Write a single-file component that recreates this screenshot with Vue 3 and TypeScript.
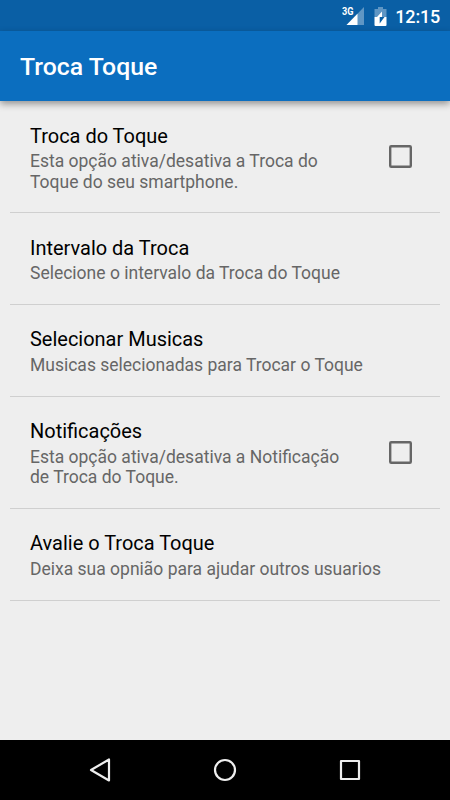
<script setup lang="ts">
interface Preference {
  title: string
  summary: string[]
  checkbox?: boolean
}

const preferences: Preference[] = [
  { title: 'Troca do Toque', summary: ['Esta opção ativa/desativa a Troca do', 'Toque do seu smartphone.'], checkbox: true },
  { title: 'Intervalo da Troca', summary: ['Selecione o intervalo da Troca do Toque'] },
  { title: 'Selecionar Musicas', summary: ['Musicas selecionadas para Trocar o Toque'] },
  { title: 'Notificações', summary: ['Esta opção ativa/desativa a Notificação', 'de Troca do Toque.'], checkbox: true },
  { title: 'Avalie o Troca Toque', summary: ['Deixa sua opnião para ajudar outros usuarios'] },
]
</script>

<template>
  <div class="screen">
    <header class="status">
      <svg class="signal" width="23" height="20" viewBox="0 0 23 20">
        <path d="M22 1V19H4.500Z" fill="#fff" fill-opacity=".35" />
        <path d="M15.500 7.700V19H4.500Z" fill="#fff" />
        <text x="0" y="8.800" class="network" textLength="11.500" lengthAdjust="spacingAndGlyphs">3G</text>
      </svg>
      <svg class="battery" width="13" height="19" viewBox="0 0 13 19">
        <path d="M4 0H9V2H12.500V10H.5V2H4Z" fill="#fff" fill-opacity=".35" />
        <path d="M.5 10H12.500V18Q12.500 19 11.500 19H1.500Q.5 19 .5 18Z" fill="#fff" />
        <path d="M8 4.500V10H3Z" fill="#fff" />
        <path d="M3 10H5.700V16.500L10.500 10Z" fill="#0a5fa5" />
      </svg>
      <span class="clock">12:15</span>
    </header>
    <div class="toolbar"><h1>Troca Toque</h1></div>
    <main class="list">
      <section v-for="item in preferences" :key="item.title" class="row">
        <div class="copy">
          <h2>{{ item.title }}</h2>
          <p v-for="line in item.summary" :key="line">{{ line }}</p>
        </div>
        <svg v-if="item.checkbox" class="box" width="23" height="23" viewBox="0 0 23 23">
          <rect x="1.200" y="1.200" width="20.600" height="20.600" rx="1" fill="none" stroke="#666" stroke-width="2.400" />
        </svg>
      </section>
    </main>
    <nav class="nav">
      <svg width="350" height="60" viewBox="0 0 350 60" fill="none" stroke="#eee" stroke-width="2.200">
        <path d="M59 19.500V40.500L41 30Z" stroke-linejoin="round" />
        <circle cx="175" cy="30" r="10" />
        <rect x="291" y="21" width="18" height="18" stroke-linejoin="round" />
      </svg>
    </nav>
  </div>
</template>

<style>
body { margin: 0; }
</style>

<style scoped>
.screen { width: 450px; height: 800px; display: flex; flex-direction: column; background: #eee; font-family: Roboto, sans-serif; overflow: hidden; }
.status { height: 31px; box-sizing: border-box; flex: none; display: flex; align-items: center; justify-content: flex-end; padding: 1px 10px 0 0; background: #0a5fa5; color: #fff; }
.network { font: 700 10px Roboto, sans-serif; fill: #fff; }
.battery { margin: 0 8px 0 9px; }
.clock { font-size: 18px; font-weight: 500; line-height: 30px; letter-spacing: -.2px; padding-top: 1px; }
.toolbar { height: 70px; flex: none; display: flex; align-items: center; padding-left: 20px; background: #0b6ebf; color: #fff; box-shadow: 0 3px 7px rgba(0, 0, 0, .38); }
h1 { margin: 2px 0 0; font-size: 24.8px; line-height: 30px; font-weight: 500; }
.list { flex: 1; padding: 0 10px; }
.row { display: flex; justify-content: space-between; align-items: center; box-sizing: border-box; padding: 21.5px 28.5px 20.1px 20px; border-bottom: 1px solid #cfcfcf; }
h2 { margin: 0 0 1.5px; font-size: 19.98px; line-height: 27px; font-weight: 400; color: #000; white-space: nowrap; }
p { margin: 0; font-size: 17.5px; line-height: 20.6px; color: #666; white-space: nowrap; }
.box { flex: none; margin-bottom: 2px; }
.nav { height: 60px; flex: none; display: flex; justify-content: center; background: #000; }
</style>
